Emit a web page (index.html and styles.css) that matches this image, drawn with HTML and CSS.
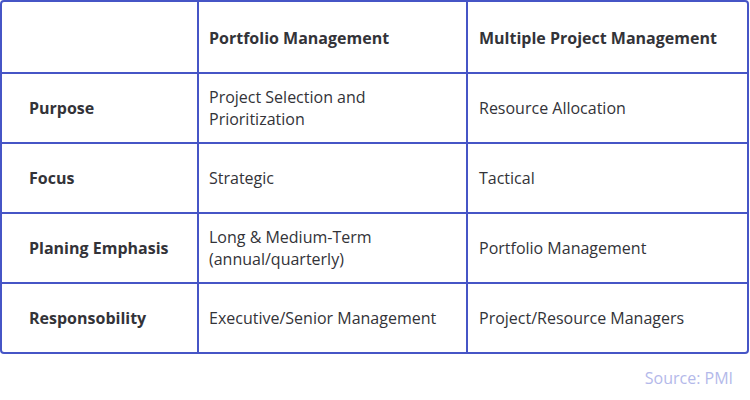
FILE: index.html
```html
<!DOCTYPE html>
<html>
<head>
<meta charset="utf-8">
<link rel="stylesheet" href="styles.css">
</head>
<body>
<div class="table">
  <div class="cell head"></div>
  <div class="cell head">Portfolio Management</div>
  <div class="cell head">Multiple Project Management</div>

  <div class="cell label">Purpose</div>
  <div class="cell">Project Selection and Prioritization</div>
  <div class="cell">Resource Allocation</div>

  <div class="cell label">Focus</div>
  <div class="cell">Strategic</div>
  <div class="cell">Tactical</div>

  <div class="cell label">Planing Emphasis</div>
  <div class="cell">Long &amp; Medium-Term (annual/quarterly)</div>
  <div class="cell">Portfolio Management</div>

  <div class="cell label">Responsobility</div>
  <div class="cell">Executive/Senior Management</div>
  <div class="cell">Project/Resource Managers</div>
</div>
<div class="source">Source: PMI</div>
</body>
</html>
```
FILE: styles.css
```css
html, body {
  margin: 0;
  padding: 0;
  background: #ffffff;
}
body {
  font-family: "Open Sans", "Noto Sans", sans-serif;
  font-size: 16px;
  line-height: 22px;
  color: #333338;
  width: 750px;
}
.table {
  width: 749px;
  box-sizing: border-box;
  display: grid;
  grid-template-columns: 195px 267px 279px;
  grid-template-rows: 70px 68px 68px 68px 68px;
  gap: 2px;
  background: #4655c6;
  border: 2px solid #4655c6;
  border-radius: 4px;
  overflow: hidden;
}
.cell {
  background: #ffffff;
  display: flex;
  align-items: center;
  padding: 0 20px 0 10px;
}
.cell:nth-child(3n) {
  padding-left: 11px;
}
.head {
  font-weight: 700;
  padding-top: 2px;
}
.label {
  font-weight: 700;
  padding-left: 27px;
}
.source {
  text-align: right;
  padding-right: 17px;
  margin-top: 13px;
  color: #b4b9ea;
}
```
